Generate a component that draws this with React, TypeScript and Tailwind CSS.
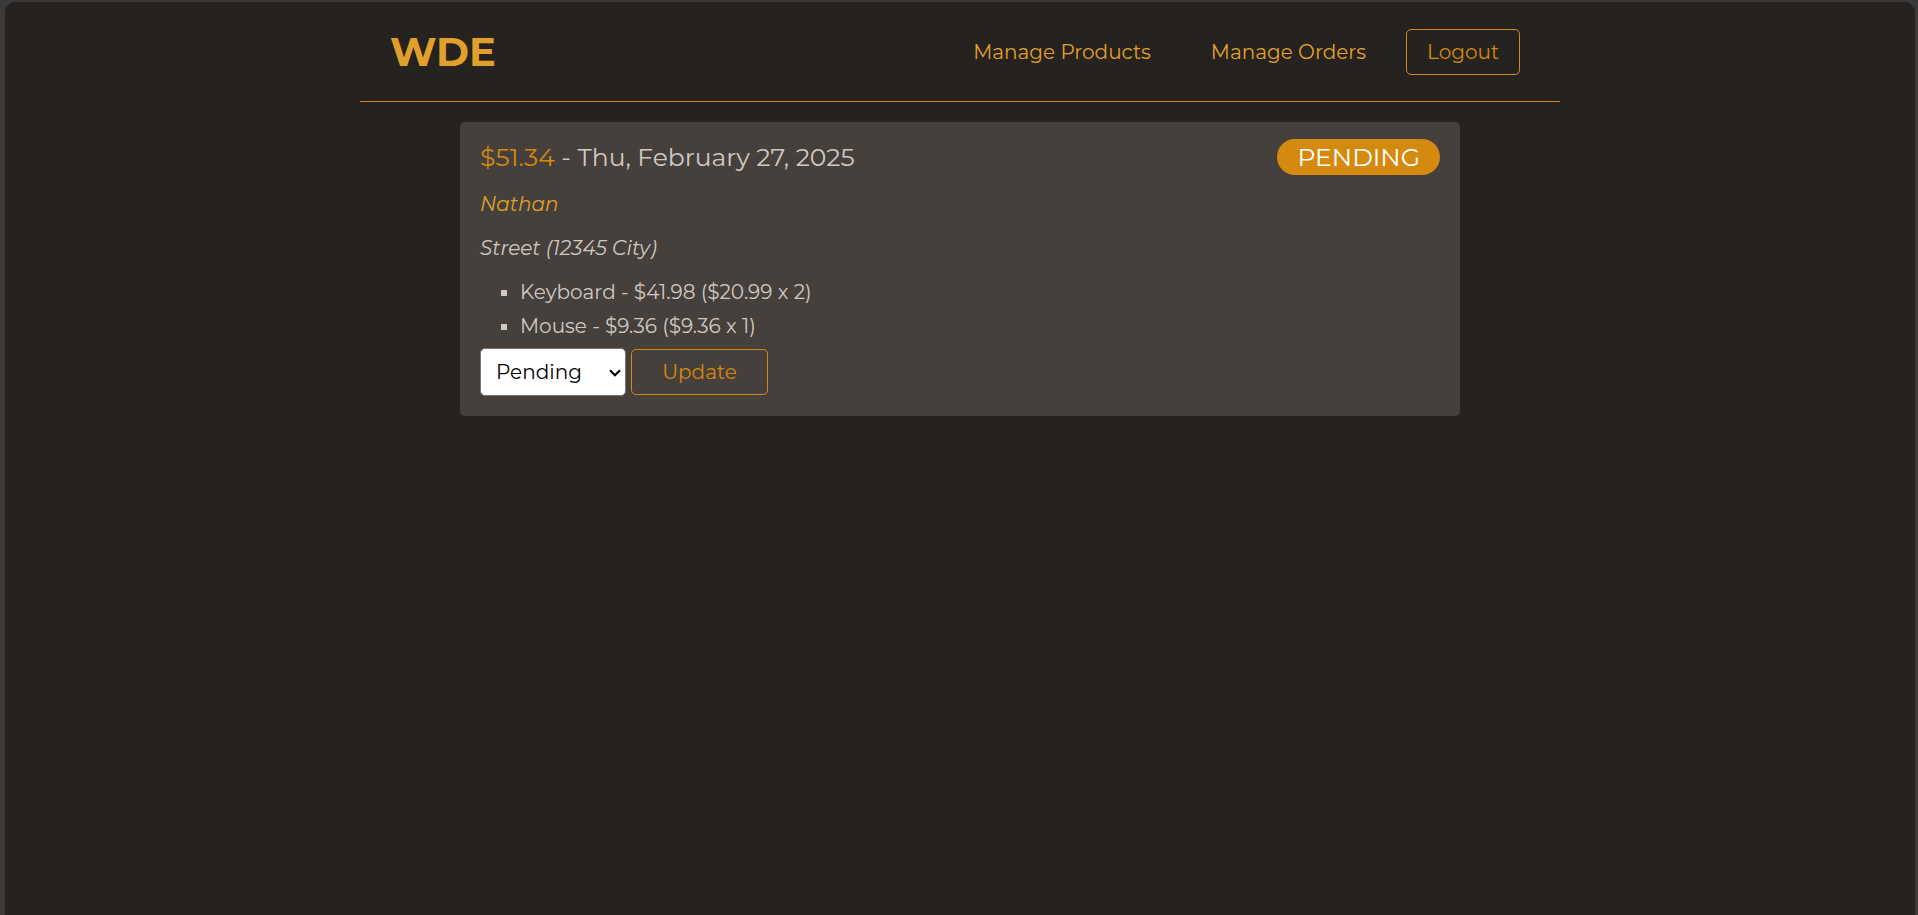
const navLinks = [
  { label: "Manage Products", href: "#products" },
  { label: "Manage Orders", href: "#orders" },
];

const order = {
  total: "$51.34",
  date: "Thu, February 27, 2025",
  customer: "Nathan",
  address: "Street (12345 City)",
  items: ["Keyboard - $41.98 ($20.99 x 2)", "Mouse - $9.36 ($9.36 x 1)"],
};

function Header() {
  return (
    <header className="mx-auto flex h-[100px] w-full max-w-[1200px] items-center justify-between border-b border-[#d4890f] pr-10 pl-[30px]">
      <a href="#home" className="text-[40px] font-bold text-[#e0a02b]">
        WDE
      </a>
      <nav className="flex items-center gap-10">
        <ul className="flex items-center gap-[60px] text-[#e0a02b]">
          {navLinks.map((link) => (
            <li key={link.label}>
              <a href={link.href}>{link.label}</a>
            </li>
          ))}
        </ul>
        <button type="button" className="rounded-[5px] border border-[#d4890f] px-5 py-2 leading-7 text-[#d4890f]">
          Logout
        </button>
      </nav>
    </header>
  );
}

function OrderCard() {
  return (
    <article className="rounded-[5px] bg-[#46403c] px-5 pt-[17px] pb-5 text-[#d0c9c2]">
      <div className="flex items-center justify-between text-[25px] leading-9">
        <h2>
          <span className="text-[#d4890f]">{order.total}</span> - {order.date}
        </h2>
        <p className="rounded-full bg-[#d4890f] px-5 text-white">PENDING</p>
      </div>
      <p className="mt-[13px] leading-8 italic text-[#e0a02b]">{order.customer}</p>
      <p className="mt-3 leading-8 italic">{order.address}</p>
      <ul className="mt-[11px] mb-[5px] list-[square] pl-10">
        {order.items.map((item) => (
          <li key={item} className="leading-[34px]">
            {item}
          </li>
        ))}
      </ul>
      <form className="flex items-center gap-[5px]" onSubmit={(e) => e.preventDefault()}>
        <div className="relative">
          <select
            aria-label="Order status"
            defaultValue="pending"
            className="h-12 w-[146px] appearance-none rounded-[5px] border border-[#767676] bg-white px-[15px] text-black"
          >
            <option value="pending">Pending</option>
            <option value="fulfilled">Fulfilled</option>
            <option value="cancelled">Cancelled</option>
          </select>
          <svg
            aria-hidden="true"
            viewBox="0 0 12 8"
            className="pointer-events-none absolute top-[21px] right-[5px] h-2 w-3"
            fill="none"
            stroke="black"
            strokeWidth="2.2"
          >
            <path d="M1 1.2 6 6.2 11 1.2" />
          </svg>
        </div>
        <button type="submit" className="min-w-[137px] rounded-[5px] border border-[#d4890f] px-5 py-2 leading-7 text-[#d4890f]">
          Update
        </button>
      </form>
    </article>
  );
}

export default function App() {
  return (
    <div className="flex min-h-screen bg-[#3a3a3a] pt-[2px] pr-[3px] pl-[5px] font-['Montserrat','Inter',sans-serif] text-[20px]">
      <div className="flex-1 rounded-t-[10px] bg-[#26221f]">
        <Header />
        <main className="mx-auto mt-5 w-full max-w-[1000px]">
          <OrderCard />
        </main>
      </div>
    </div>
  );
}
